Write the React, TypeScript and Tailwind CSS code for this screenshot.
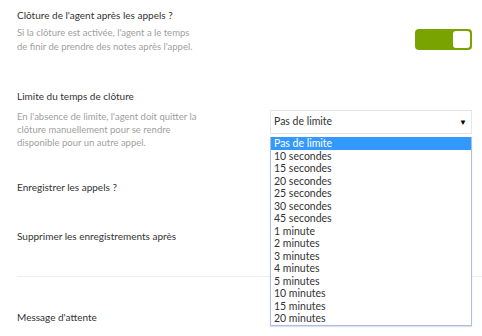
import React from "react";

const OPTIONS = [
  "Pas de limite",
  "10 secondes",
  "15 secondes",
  "20 secondes",
  "25 secondes",
  "30 secondes",
  "45 secondes",
  "1 minute",
  "2 minutes",
  "3 minutes",
  "4 minutes",
  "5 minutes",
  "10 minutes",
  "15 minutes",
  "20 minutes",
];

function Toggle() {
  return (
    <div className="w-[57px] h-[21px] rounded-[4px] bg-[#78a300] p-[2px] flex justify-end">
      <div className="w-[17px] h-[17px] rounded-[3px] bg-white" />
    </div>
  );
}

export default function App() {
  return (
    <div className="relative w-[482px] h-[336px] bg-white overflow-hidden font-['Lato',sans-serif] text-[10px] text-[#333]">
      {/* clôture */}
      <div className="flex justify-between pl-[17px] pr-[10px] pt-[8px]">
        <div>
          <div className="leading-[14px]">Clôture de l'agent après les appels ?</div>
          <div className="mt-[4px] text-[9.5px] leading-[14px] text-[#a0a0a0]">
            Si la clôture est activée, l'agent a le temps
            <br />
            de finir de prendre des notes après l'appel.
          </div>
        </div>
        <div className="mt-[21px]">
          <Toggle />
        </div>
      </div>

      {/* limite */}
      <div className="flex justify-between pl-[17px] pr-[10px] mt-[35px]">
        <div>
          <div className="leading-[14px]">Limite du temps de clôture</div>
          <div className="mt-[7px] text-[9.5px] leading-[13px] text-[#a0a0a0]">
            En l'absence de limite, l'agent doit quitter la
            <br />
            clôture manuellement pour se rendre
            <br />
            disponible pour un autre appel.
          </div>
        </div>
        <div className="mt-[21px] w-[202px] h-[24px] border border-[#e6e6e6] flex items-center justify-between pl-[3px] pr-[4px] text-[10.5px]">
          <span>Pas de limite</span>
          <span className="text-[8px] text-black">▼</span>
        </div>
      </div>

      <div className="pl-[17px] mt-[31px] leading-[14px]">Enregistrer les appels ?</div>
      <div className="pl-[17px] mt-[35px] leading-[14px]">Supprimer les enregistrements après</div>
      <div className="ml-[17px] mt-[33px] h-px bg-[#efefef]" />
      <div className="pl-[17px] mt-[33px] leading-[14px]">Message d'attente</div>

      {/* liste ouverte */}
      <div className="absolute left-[270px] top-[137px] w-[202px] border border-t-0 border-[#a9bfe6] bg-white text-[10.5px] shadow-[0_1px_1px_rgba(0,0,0,0.12)]">
        {OPTIONS.map((o, i) => (
          <div
            key={o}
            className={`h-[12.5px] leading-[12.5px] pl-[3px] ${i === 0 ? "bg-[#3399ff] text-white" : ""}`}
          >
            {o}
          </div>
        ))}
      </div>
    </div>
  );
}
